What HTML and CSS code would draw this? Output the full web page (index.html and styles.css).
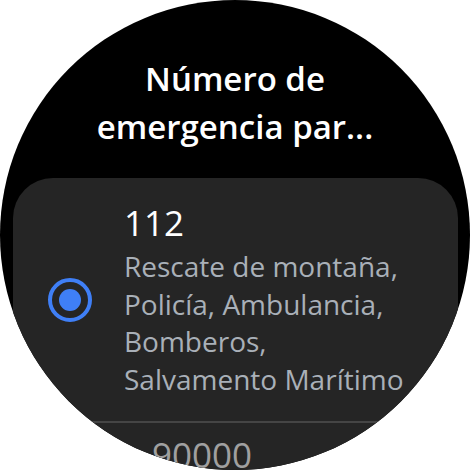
FILE: index.html
```html
<!DOCTYPE html>
<html lang="es">
<head>
<meta charset="utf-8">
<title>Número de emergencia</title>
<link rel="stylesheet" href="styles.css">
</head>
<body>
<div class="watch">
  <h1 class="title">Número de<br>emergencia par...</h1>
  <div class="card">
    <div class="item">
      <div class="radio"><span class="dot"></span></div>
      <div class="texts">
        <div class="number">112</div>
        <div class="desc">Rescate de montaña,<br>Policía, Ambulancia,<br>Bomberos,<br>Salvamento Marítimo</div>
      </div>
    </div>
    <div class="divider"></div>
    <div class="item next">
      <div class="number dim">90000</div>
    </div>
  </div>
</div>
</body>
</html>
```
FILE: styles.css
```css
html, body {
  margin: 0;
  padding: 0;
  background: #ffffff;
}
body {
  width: 470px;
  height: 470px;
  overflow: hidden;
  font-family: "Open Sans", "Noto Sans", sans-serif;
}
.watch {
  width: 470px;
  height: 470px;
  border-radius: 50%;
  background: #000000;
  overflow: hidden;
  display: flex;
  flex-direction: column;
}
.title {
  margin: 55px 0 27px;
  color: #ffffff;
  font-size: 33px;
  font-weight: 600;
  line-height: 48px;
  text-align: center;
}
.card {
  margin: 0 12px 0 13px;
  background: #252525;
  border-radius: 40px;
  display: flex;
  flex-direction: column;
  flex-shrink: 0;
}
.item {
  display: flex;
  align-items: center;
  padding: 23px 0 23px 35px;
}
.radio {
  width: 44px;
  height: 44px;
  box-sizing: border-box;
  border: 4.5px solid #3f7ff6;
  border-radius: 50%;
  display: flex;
  align-items: center;
  justify-content: center;
  flex-shrink: 0;
  margin-right: 32px;
}
.dot {
  width: 22px;
  height: 22px;
  border-radius: 50%;
  background: #3f7ff6;
}
.texts {
  display: flex;
  flex-direction: column;
}
.number {
  color: #ffffff;
  font-size: 35px;
  line-height: 44px;
  font-weight: 400;
}
.desc {
  margin-top: 3px;
  color: #a9b0b8;
  font-size: 28px;
  line-height: 37.5px;
  white-space: nowrap;
}
.divider {
  height: 2px;
  background: #454545;
}
.item.next {
  padding: 10px 0 20px 139px;
}
.dim {
  color: #a0a0a0;
}
```
